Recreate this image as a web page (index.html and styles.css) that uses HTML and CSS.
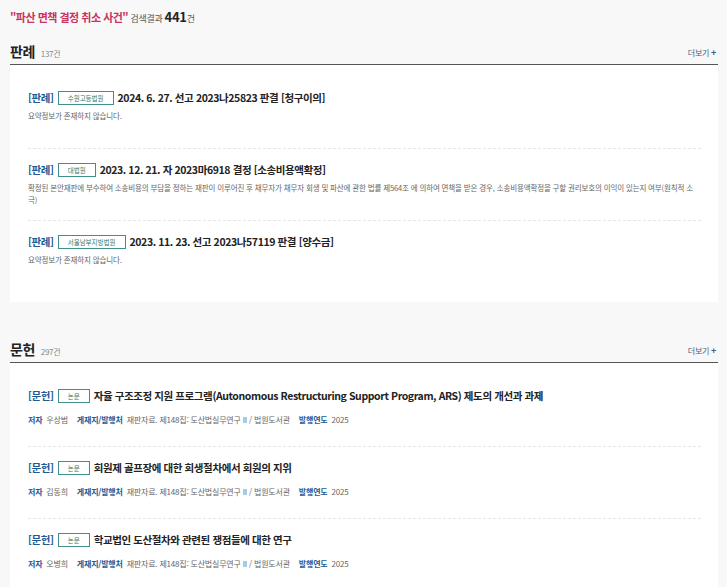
FILE: index.html
```html
<!DOCTYPE html>
<html lang="ko">
<head>
  <meta charset="UTF-8">
  <meta name="viewport" content="width=device-width, initial-scale=1.0">
  <title>검색결과</title>
  <link rel="stylesheet" href="styles.css">
</head>
<body>
  <div class="wrap">
    <p class="summary"><span class="keyword">"파산 면책 결정 취소 사건"</span> 검색결과 <b>441</b>건</p>

    <div class="sec-head">
      <h2>판례 <span class="cnt">137건</span></h2>
      <a class="more" href="#">더보기 <b>+</b></a>
    </div>
    <div class="card">
      <div class="item">
        <div class="title"><span class="kind">[판례]</span><span class="badge">수원고등법원</span>2024. 6. 27. 선고 2023나25823 판결 [청구이의]</div>
        <p class="desc">요약정보가 존재하지 않습니다.</p>
      </div>
      <div class="item">
        <div class="title"><span class="kind">[판례]</span><span class="badge">대법원</span>2023. 12. 21. 자 2023마6918 결정 [소송비용액확정]</div>
        <p class="desc">확정된 본안재판에 부수하여 소송비용의 부담을 정하는 재판이 이루어진 후 채무자가 채무자 회생 및 파산에 관한 법률 제564조 에 의하여 면책을 받은 경우, 소송비용액확정을 구할 권리보호의 이익이 있는지 여부(원칙적 소극)</p>
      </div>
      <div class="item">
        <div class="title"><span class="kind">[판례]</span><span class="badge">서울남부지방법원</span>2023. 11. 23. 선고 2023나57119 판결 [양수금]</div>
        <p class="desc">요약정보가 존재하지 않습니다.</p>
      </div>
    </div>

    <div class="sec-head second">
      <h2>문헌 <span class="cnt">297건</span></h2>
      <a class="more" href="#">더보기 <b>+</b></a>
    </div>
    <div class="card">
      <div class="item">
        <div class="title"><span class="kind">[문헌]</span><span class="badge">논문</span>자율 구조조정 지원 프로그램(Autonomous Restructuring Support Program, ARS) 제도의 개선과 과제</div>
        <p class="meta"><b>저자</b>우상범<b>게재지/발행처</b>재판자료. 제148집: 도산법실무연구 II / 법원도서관<b>발행연도</b>2025</p>
      </div>
      <div class="item">
        <div class="title"><span class="kind">[문헌]</span><span class="badge">논문</span>회원제 골프장에 대한 회생절차에서 회원의 지위</div>
        <p class="meta"><b>저자</b>김동희<b>게재지/발행처</b>재판자료. 제148집: 도산법실무연구 II / 법원도서관<b>발행연도</b>2025</p>
      </div>
      <div class="item">
        <div class="title"><span class="kind">[문헌]</span><span class="badge">논문</span>학교법인 도산절차와 관련된 쟁점들에 대한 연구</div>
        <p class="meta"><b>저자</b>오병희<b>게재지/발행처</b>재판자료. 제148집: 도산법실무연구 II / 법원도서관<b>발행연도</b>2025</p>
      </div>
    </div>
  </div>
</body>
</html>
```

FILE: styles.css
```css
body {
  margin: 0;
  background: #f8f8f8;
  font-family: "Noto Sans CJK KR", "Noto Sans", sans-serif;
  color: #222;
}
.wrap {
  width: 708px;
  margin-left: 10px;
}
.summary {
  margin: 0;
  margin-top: 7px;
  height: 20px;
  font-size: 9px;
  color: #555;
  line-height: 20px;
  letter-spacing: -0.3px;
}
.summary .keyword {
  color: #c8335f;
  font-weight: bold;
  font-size: 11px;
  letter-spacing: -0.5px;
}
.summary b {
  font-size: 13px;
  color: #222;
}
.sec-head {
  display: flex;
  justify-content: space-between;
  align-items: center;
  height: 22px;
  margin-top: 14px;
  padding-bottom: 1px;
  border-bottom: 1px solid #555;
}
.sec-head.second {
  margin-top: 37px;
}
.sec-head h2 {
  margin: 0;
  font-size: 14px;
  line-height: 22px;
  font-weight: bold;
  letter-spacing: -0.3px;
}
.sec-head .cnt {
  font-size: 8px;
  font-weight: normal;
  color: #888;
  margin-left: 2px;
}
.more {
  font-size: 8px;
  color: #4b5f80;
  text-decoration: none;
  margin-right: 2px;
  letter-spacing: -0.3px;
}
.more b {
  font-size: 9px;
}
.card {
  background: #fff;
  padding: 12px 17px 10px 18px;
}
.item {
  padding-top: 13px;
  min-height: 58px;
  border-bottom: 1px dashed #e6e6e6;
}
.item:last-child {
  border-bottom: none;
}
.title {
  display: flex;
  align-items: center;
  height: 16px;
  font-size: 10.5px;
  line-height: 16px;
  font-weight: bold;
  color: #222;
  letter-spacing: -0.4px;
  white-space: nowrap;
}
.kind {
  color: #1f5a94;
}
.badge {
  display: inline-block;
  border: 1px solid #3f8f8d;
  color: #2f7d6e;
  font-size: 6.5px;
  font-weight: normal;
  padding: 0 9px;
  margin: 0 4px;
  line-height: 12px;
  letter-spacing: 0;
}
.desc {
  margin: 4px 0 0;
  font-size: 7.5px;
  color: #666;
  line-height: 12px;
  letter-spacing: -0.15px;
}
.meta {
  margin: 10px 0 0;
  font-size: 8px;
  line-height: 12px;
  color: #666;
  letter-spacing: -0.2px;
}
.meta b {
  color: #1f5a94;
  margin: 0 4px 0 9px;
}
.meta b:first-child {
  margin-left: 0;
}
```
